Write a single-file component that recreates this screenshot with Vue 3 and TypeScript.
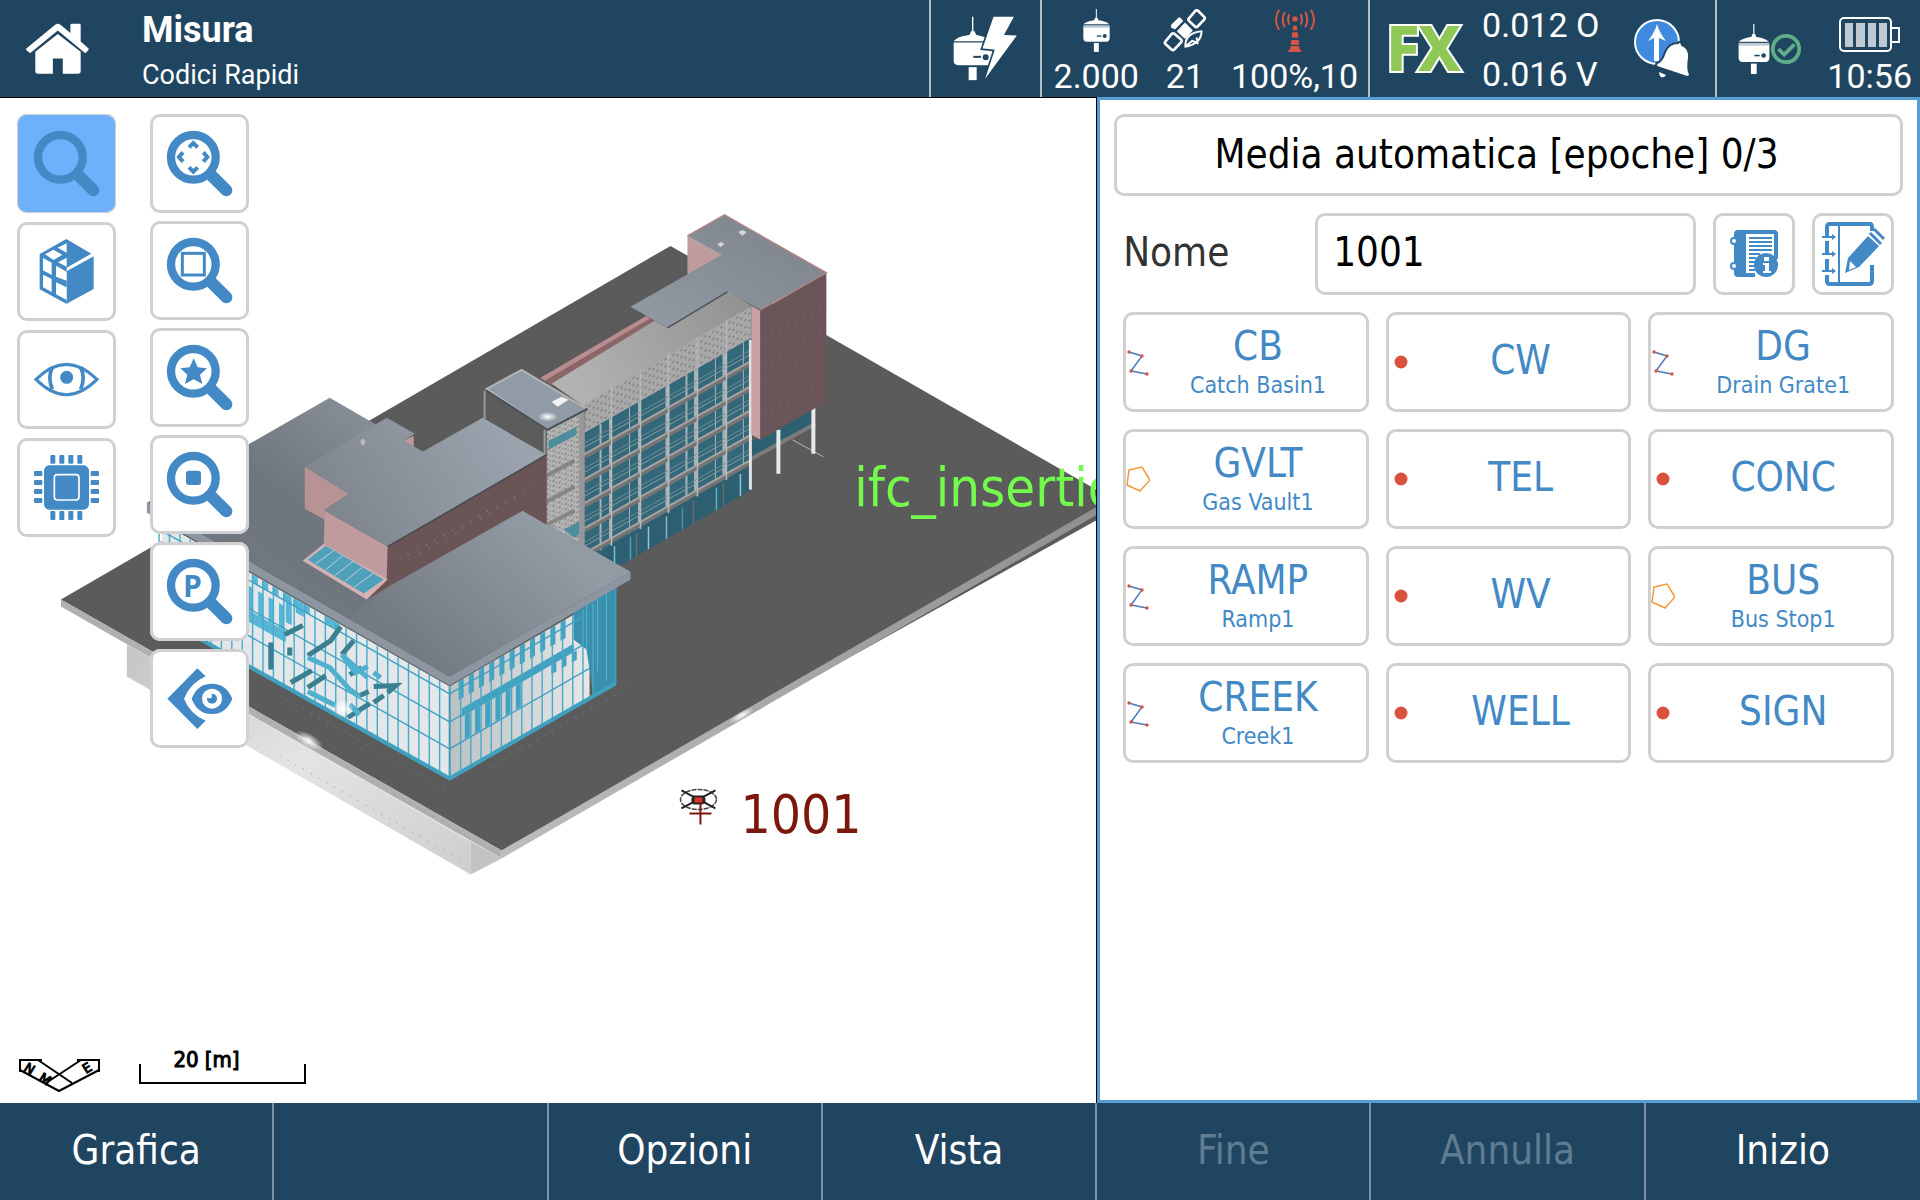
<script setup lang="ts">
import { ref } from 'vue'

type CodeKind = 'line' | 'point' | 'area'
interface QuickCode { code: string; name?: string; kind: CodeKind }
interface SoftKey { label: string; disabled?: boolean }

const pointName = ref('1001')

const codes: QuickCode[] = [
  { code: 'CB', name: 'Catch Basin1', kind: 'line' },
  { code: 'CW', kind: 'point' },
  { code: 'DG', name: 'Drain Grate1', kind: 'line' },
  { code: 'GVLT', name: 'Gas Vault1', kind: 'area' },
  { code: 'TEL', kind: 'point' },
  { code: 'CONC', kind: 'point' },
  { code: 'RAMP', name: 'Ramp1', kind: 'line' },
  { code: 'WV', kind: 'point' },
  { code: 'BUS', name: 'Bus Stop1', kind: 'area' },
  { code: 'CREEK', name: 'Creek1', kind: 'line' },
  { code: 'WELL', kind: 'point' },
  { code: 'SIGN', kind: 'point' },
]

const softKeys: SoftKey[] = [
  { label: 'Grafica' },
  { label: '' },
  { label: 'Opzioni' },
  { label: 'Vista' },
  { label: 'Fine', disabled: true },
  { label: 'Annulla', disabled: true },
  { label: 'Inizio' },
]

// Glass hall: both faces meet at the corner x = 450.
const corner = 450
const pt = (x: number, y: number) => `${Math.round(x * 10) / 10},${Math.round(y * 10) / 10}`
const westY = (x: number, t: number) => {
  const d = corner - x
  return (687 - d * 0.567) * (1 - t) + (780 - d * 0.56) * t
}
const eastY = (x: number, t: number) => {
  const d = x - corner
  return (687 - d * 0.58) * (1 - t) + (780 - d * 0.573) * t
}
const quad = (f: (x: number, t: number) => number, x0: number, x1: number, t0: number, t1: number) =>
  [pt(x0, f(x0, t0)), pt(x1, f(x1, t0)), pt(x1, f(x1, t1)), pt(x0, f(x0, t1))].join(' ')

const rowStops = [0.08, 0.38, 0.67]
const westMullions = Array.from({ length: 28 }, (_, i) => {
  const x = 440 - i * 10.4
  return { x, y1: westY(x, 0), y2: westY(x, 1) }
})
const eastMullions = Array.from({ length: 14 }, (_, i) => {
  const x = 461 + i * 10.2
  return { x, y1: eastY(x, 0), y2: eastY(x, 1) }
})
const westPatches: string[] = [
  ...[0, 1, 2, 3, 4, 5].map((i) => quad(westY, 252 + i * 10.4, 258 + i * 10.4, 0, 0.08)),
  ...[0, 1, 2, 3].map((i) => quad(westY, 248 + i * 10.4, 253 + i * 10.4, 0.14, 0.4)),
  quad(westY, 248, 286, 0.4, 0.52),
  quad(westY, 296, 304, 0, 0.14),
  quad(westY, 326, 340, 0, 0.07),
  quad(westY, 286, 292, 0, 0.3),
]
const eastPatches: string[] = [
  ...[0, 1, 2, 3, 4, 5, 6, 7, 8, 9, 10].map((i) => quad(eastY, 459 + i * 10.2, 464 + i * 10.2, 0, 0.2)),
  quad(eastY, 462, 574, 0.31, 0.4),
  ...[1, 2, 3, 4, 5, 6].map((i) => quad(eastY, 455 + i * 10.2, 460 + i * 10.2, 0.4, 0.66)),
  ...[9, 10, 11].map((i) => quad(eastY, 460 + i * 10.2, 465 + i * 10.2, 0.4, 0.5)),
]

// Office wing: floor beams fall to the left, posts stand on every bay.
const beams = [363, 388, 412, 437, 462].map((y) => ({ y1: y, y2: y + 167 * 0.56 }))
const wingTop = (x: number) => 338 + (752 - x) * 0.572
const posts = [
  { x: 601, w: 2 }, { x: 611, w: 3 }, { x: 630, w: 1 }, { x: 640, w: 3 }, { x: 668, w: 4 },
  { x: 687, w: 2 }, { x: 696, w: 3 }, { x: 716, w: 1 }, { x: 725, w: 4 }, { x: 744, w: 1 },
].map((p) => ({ ...p, y1: wingTop(p.x), y2: wingTop(p.x) + 126 }))
const tallPosts = [612, 641, 669, 698, 727].map((x) => ({ x, y1: wingTop(x) - 32, y2: wingTop(x) + 128 }))
const groundPosts = [
  { x: 615, c: '#6fc0d6' }, { x: 631, c: '#4aa3bd' }, { x: 637, c: '#6b7275' }, { x: 649, c: '#8cc6d6' },
  { x: 667, c: '#8cb6c0' }, { x: 683, c: '#3f93ad' }, { x: 694, c: '#6b6b6b' }, { x: 717, c: '#57b3cc' },
  { x: 724, c: '#6b6b6b' }, { x: 741, c: '#8cc6d6' },
].map((p) => ({ ...p, y1: wingTop(p.x) + 130, y2: 490 + (752 - p.x) * 0.577 }))
</script>

<template>
  <div class="app">
    <svg class="defs" aria-hidden="true">
      <symbol id="receiver" viewBox="0 0 82 130">
        <path d="M39 0h3v26h-3z" fill="#fff" />
        <path d="M1 46C10 38 22 36 34 34L37 26h7l3 8c12 2 24 4 33 12z" fill="#fff" />
        <path d="M1 49h80v8H1z" fill="#b9c6d0" />
        <path d="M1 56h80v32q0 11-11 11H12Q1 99 1 88z" fill="#fff" />
        <path d="M42 80h14v4H42z" fill="#204561" />
        <circle cx="66" cy="82" r="6" fill="#204561" />
        <path d="M33 103h15v27H33z" fill="#fff" />
      </symbol>
      <symbol id="lens" viewBox="450 42 297 297">
        <circle cx="580" cy="172" r="67" fill="none" stroke="#4289c5" stroke-width="25" />
        <path d="M636 228L679 271" stroke="#4289c5" stroke-width="36" stroke-linecap="round" />
      </symbol>
    </svg>

    <header class="topbar">
      <button class="home" type="button" aria-label="Home">
        <svg viewBox="78 68 190 154" width="63" height="51">
          <path fill="#fff" d="M78 146L166 73Q174 67 182 73L212 98V74Q212 70 216 70H239Q243 70 243 74V124L267 145V149L259 158H255L174 91L92 158H88L78 149Z" />
          <path fill="#fff" d="M106 155L174 101L243 155V213Q243 221 235 221H189V175H159V221H114Q106 221 106 213Z" />
        </svg>
      </button>
      <div class="titles">
        <h1>Misura</h1>
        <p>Codici Rapidi</p>
      </div>
      <div class="cell power">
        <svg viewBox="100 48 192 194" width="64" height="65">
          <path fill="#fff" d="M157 50h4v43h4l4 11c12 3 24 5 34 12l12 7H102c8-7 14-12 22-13 8-3 18-4 26-6l4-11h3z" />
          <path fill="#fff" d="M102 127h116v54q0 14-14 14H116q-14 0-14-14z" />
          <path fill="#204561" d="M161 167h23v6h-23z" />
          <circle cx="198" cy="171" r="9" fill="#204561" />
          <path fill="#fff" d="M147 201h24v39h-24z" />
          <path fill="#fff" stroke="#204561" stroke-width="5" d="M220 47H287L257 102L296 104L189 250L222 151L185 147Z" />
        </svg>
      </div>
      <div class="cell status">
        <div class="stat">
          <svg width="27" height="43"><use href="#receiver" /></svg>
          <span>2.000</span>
        </div>
        <div class="stat">
          <svg viewBox="734 26 132 130" width="44" height="43" fill="none" stroke="#fff" stroke-linejoin="round">
            <path stroke-width="8" d="M832 31Q836 28 840 32L858 50Q862 54 858 58L838 79Q834 83 830 79L812 62Q808 58 812 54Z" />
            <path stroke-width="8" d="M760 101Q764 98 768 101L788 118Q792 122 788 127L768 148Q764 152 760 149L741 132Q737 128 741 124Z" />
            <path fill="#fff" stroke-width="4" d="M800 70L821 91L800 114L778 93Z" />
            <path fill="#fff" stroke-width="6" d="M783 54L791 62L769 84L761 81V75Z" />
            <path stroke-width="6" d="M801 140Q799 98 850 93Q850 130 801 140L822 122L838 130L835 112" />
          </svg>
          <span>21</span>
        </div>
        <div class="stat">
          <svg viewBox="1064 26 126 130" width="42" height="43" fill="none" stroke="#da5541" stroke-width="6">
            <circle cx="1127" cy="56" r="8" fill="#da5541" stroke="none" />
            <path d="M1110 42Q1102 57 1110 73M1096 35Q1084 57 1096 81M1079 28Q1060 58 1079 89M1144 42Q1152 57 1144 73M1158 35Q1170 57 1158 81M1175 28Q1194 58 1175 89" />
            <path fill="#da5541" stroke="none" d="M1122 76h10l2 14h-14zM1119 96h16l2 16h-20zM1116 120h22l2 14h-26zM1114 138h26l1 11h5v7h-39v-7h5z" />
          </svg>
          <span>100%,10</span>
        </div>
      </div>
      <div class="cell precision">
        <svg class="fx-logo" viewBox="0 0 80 56" width="80" height="56">
          <text x="1" y="50" class="fx">F</text>
          <text x="33" y="50" class="fx">X</text>
        </svg>
        <div class="values"><span>0.012 O</span><span>0.016 V</span></div>
        <svg class="alert" viewBox="272 18 60 62" width="60" height="62">
          <circle cx="297" cy="42" r="22" fill="#3f8ade" stroke="#fff" stroke-width="2" />
          <path fill="#fff" d="M294 61V38L288 41Q295 32 297 24Q299 32 306 41L299 38V61Z" />
          <path fill="#fff" stroke="#204561" stroke-width="2" d="M319 42Q321 41 322 45Q330 48 329 58Q327 70 330 74Q330 77 327 77L297 67Q295 65 297 63Q302 62 305 52Q309 43 318 43Z" />
          <path fill="#fff" d="M299 72L306 75Q304 78 301 77Q299 75 299 72Z" />
        </svg>
      </div>
      <div class="cell device">
        <div class="link">
          <svg width="32" height="50"><use href="#receiver" /></svg>
          <svg viewBox="0 0 34 34" width="32" height="34" fill="none" stroke="#5fae88" stroke-width="4">
            <circle cx="17" cy="17" r="14" /><path d="M9 17L15 23L26 12" />
          </svg>
        </div>
        <div class="stat">
          <svg class="battery" viewBox="0 0 62 36" width="62" height="36" fill="none" stroke="#fff" stroke-width="2">
            <rect x="1" y="1" width="51" height="33" rx="4" />
            <path d="M52 11h8v14h-8" />
            <path fill="#becad3" stroke="none" d="M6 6h8v24H6zM17 6h9v24h-9zM29 6h8v24h-8zM40 6h8v24h-8z" />
          </svg>
          <span>10:56</span>
        </div>
      </div>
    </header>

    <main class="content">
      <section class="map">
        <svg class="scene" viewBox="0 98 1097 1005" preserveAspectRatio="xMinYMin meet">
          <defs>
            <linearGradient id="roofA" x1="0" y1="1" x2="1" y2="0">
              <stop offset="0" stop-color="#747b83" /><stop offset=".5" stop-color="#6f757d" /><stop offset="1" stop-color="#9ba4ae" />
            </linearGradient>
            <linearGradient id="hallRoof" gradientUnits="userSpaceOnUse" x1="400" y1="640" x2="520" y2="510">
              <stop offset="0" stop-color="#747a82" /><stop offset="1" stop-color="#929aa3" />
            </linearGradient>
            <linearGradient id="roofB" gradientUnits="userSpaceOnUse" x1="340" y1="520" x2="500" y2="420">
              <stop offset="0" stop-color="#80868d" /><stop offset="1" stop-color="#9aa3ae" />
            </linearGradient>
            <linearGradient id="roofC" x1="0" y1="1" x2="1" y2="0">
              <stop offset="0" stop-color="#929ba5" /><stop offset="1" stop-color="#7b8188" />
            </linearGradient>
            <linearGradient id="wingRoof" gradientUnits="userSpaceOnUse" x1="580" y1="390" x2="740" y2="300">
              <stop offset="0" stop-color="#b2b2b2" /><stop offset="1" stop-color="#939393" />
            </linearGradient>
            <linearGradient id="plinth" x1="0" y1="0" x2="1" y2="1">
              <stop offset="0" stop-color="#c4c4c4" /><stop offset=".5" stop-color="#e4e4e4" /><stop offset="1" stop-color="#cecece" />
            </linearGradient>
            <linearGradient id="edge" x1="0" y1="1" x2="1" y2="0">
              <stop offset="0" stop-color="#bdbdbd" /><stop offset="1" stop-color="#8e8e8e" />
            </linearGradient>
            <linearGradient id="eastGlass" x1="0" y1="0" x2="1" y2="0">
              <stop offset="0" stop-color="#bcc1c3" /><stop offset="1" stop-color="#e6e8e8" />
            </linearGradient>
            <radialGradient id="glow"><stop offset="0" stop-color="#fff" /><stop offset="1" stop-color="#fff" stop-opacity="0" /></radialGradient>
            <pattern id="perf" width="8" height="7" patternUnits="userSpaceOnUse" patternTransform="skewY(-30)">
              <rect width="8" height="7" fill="#a8a8a8" /><path d="M1 1h2v2H1zM5 4h2v2H5z" fill="#858585" />
            </pattern>
            <pattern id="mesh" width="6" height="5" patternUnits="userSpaceOnUse" patternTransform="skewY(-30)">
              <rect width="6" height="5" fill="#b4b4b4" /><path d="M1 0h2v2H1zM4 3h1v2H4z" fill="#868686" />
            </pattern>
          </defs>

          <!-- terrain slab -->
          <path fill="#5b5b5b" d="M61 600L671 246L1120 503V508L502 851Z" />
          <path fill="#b0b0b0" d="M61 600L502 851V859L61 607Z" />
          <path fill="url(#edge)" d="M502 851L1110 500V508L502 859Z" />
          <path fill="url(#plinth)" d="M127 645L471 842V875L127 677Z" />
          <path fill="#c3c3c3" d="M471 842L502 859L471 875Z" />
          <ellipse cx="309" cy="741" rx="16" ry="7" fill="url(#glow)" transform="rotate(30 309 741)" />
          <ellipse cx="742" cy="716" rx="14" ry="4" fill="url(#glow)" transform="rotate(-30 742 716)" />
          <path stroke="#8d8d8d" stroke-width="1" stroke-dasharray="1 8" fill="none" d="M280 696L450 792M490 768L632 686M262 718L470 838M280 756L460 860" />

          <!-- office wing -->
          <path fill="#8a6669" d="M541 378L649 316L657 322L552 386Z" />
          <path fill="#b78d90" d="M541 378L647 316L650 319L545 381Z" />
          <path fill="url(#wingRoof)" d="M552 384L655 321L668 328L728 291L752 306L588 409Z" />
          <path fill="url(#perf)" d="M586 404L752 306V339L585 434Z" />
          <path fill="#33687a" d="M585 433L752 338V490L622 565L585 545Z" />
          <path fill="#2d5f70" d="M585 562L752 462V490L622 565Z" />
          <line v-for="p in groundPosts" :key="'g' + p.x" :x1="p.x" :x2="p.x" :y1="p.y1" :y2="p.y2" :stroke="p.c" stroke-width="1.5" />
          <line v-for="p in posts" :key="'p' + p.x" :x1="p.x" :x2="p.x" :y1="p.y1" :y2="p.y2" stroke="#a6b3b7" :stroke-width="p.w" />
          <g v-for="b in beams" :key="b.y1">
            <line x1="752" x2="585" :y1="b.y1" :y2="b.y2" stroke="#747474" stroke-width="5" />
            <line x1="752" x2="585" :y1="b.y1 - 2" :y2="b.y2 - 2" stroke="#a3a3a3" stroke-width="2" />
            <line x1="752" x2="585" :y1="b.y1 - 9" :y2="b.y2 - 9" stroke="#8b999d" stroke-width="1" />
            <line x1="752" x2="585" :y1="b.y1 - 13" :y2="b.y2 - 13" stroke="#6c8a93" stroke-width="1" />
          </g>
          <line v-for="p in tallPosts" :key="'t' + p.x" :x1="p.x" :x2="p.x" :y1="p.y1" :y2="p.y2" stroke="#b9b9b9" stroke-width="1.5" />

          <!-- end block -->
          <path fill="#2d6172" d="M752 442L813 407V426L752 460Z" />
          <path stroke="#7c7c7c" stroke-width="4" d="M752 459L816 424" />
          <path stroke="#b9b9b9" stroke-width="1" d="M793 440L824 457" />
          <path stroke="#e9e9e9" stroke-width="4" d="M779 430V474M814 408V454" />
          <path stroke="#e2e2e2" stroke-width="3" d="M751 340V490" />
          <path fill="#bf9c9e" d="M688 236L724 256L688 275Z" />
          <path fill="#c9a1a4" d="M752 306L761 311V440L752 435Z" />
          <path fill="#6a5658" d="M761 311L827 273V402L761 440Z" />
          <path fill="url(#roofC)" d="M725 215L827 273L761 310L728 292L668 328L631 307L722 255L688 236Z" />
          <path fill="none" stroke="#b08386" stroke-width="1.5" d="M688 236L725 215L827 273L761 310" />
          <path stroke="#4d535a" stroke-width="1.5" d="M668 328L728 292" />
          <path fill="#d8d8d8" d="M718 244l4-2 3 2-4 3zM739 232l4-2 4 2-4 4z" />
          <path stroke="#96858a" stroke-width="1" stroke-dasharray="1 8" fill="none" d="M765 340L825 306M765 366L825 332M765 382L800 362M765 415L820 384" />

          <!-- stair tower -->
          <path fill="url(#mesh)" d="M547 431L585 409V546L547 524Z" />
          <path stroke="#858585" stroke-width="4" d="M547 476L575 461M547 502L575 487M547 525L575 511" />
          <path fill="#4e8d9d" d="M549 441L577 427V435L549 450ZM564 530L583 520V532L575 538Z" />
          <path stroke="#979797" stroke-width="5" d="M582 414V544" />
          <path fill="#5c5c5c" d="M484 391L547 429V456L484 420Z" />
          <path stroke="#9a9a9a" stroke-width="2" d="M485 391V419M545 430V456" />
          <path fill="#919ba7" stroke="#b4b4b4" stroke-width="2" d="M487 389L522 370L587 409L548 430Z" />
          <path fill="none" stroke="#4a5059" stroke-width="2" d="M487 391L548 430L588 409" />
          <path fill="#f1f1f1" d="M552 402l10-5 7 3-11 7z" />
          <ellipse cx="548" cy="417" rx="10" ry="5" fill="url(#glow)" />

          <!-- glass hall -->
          <path fill="#e3e7e9" d="M162 523L450 687V780L162 620Z" />
          <path fill="url(#eastGlass)" d="M450 687L590 606V699L450 780Z" />
          <path fill="#3a8fad" d="M574 612L616 588V684L594 697L587 650L574 640Z" />
          <path stroke="#56b7d3" stroke-width="1" d="M587 606V650M598 600V672M607 595V680" />
          <polygon v-for="(p, i) in westPatches" :key="'w' + i" :points="p" fill="#57b6d6" />
          <polygon v-for="(p, i) in eastPatches" :key="'e' + i" :points="p" fill="#43a2c1" />
          <line v-for="m in westMullions" :key="'wm' + m.x" :x1="m.x" :x2="m.x" :y1="m.y1" :y2="m.y2" stroke="#45aaca" stroke-width="1.4" />
          <line v-for="m in eastMullions" :key="'em' + m.x" :x1="m.x" :x2="m.x" :y1="m.y1" :y2="m.y2" stroke="#4ba9c6" stroke-width="1.4" />
          <g v-for="t in rowStops" :key="t" stroke="#3fa2c2" stroke-width="1.4">
            <line x1="162" :y1="westY(162, t)" x2="450" :y2="westY(450, t)" />
            <line x1="450" :y1="eastY(450, t)" x2="590" :y2="eastY(590, t)" />
          </g>
          <path fill="none" stroke="#40a0bf" stroke-width="4" d="M162 618L450 779L616 684" />
          <path stroke="#3e9dbb" stroke-width="2" d="M450 687V780M616 588V685" />
          <path fill="none" stroke="#3a7f90" stroke-width="5" d="M285 635L303 626M341 627L331 641L308 656M354 641L342 655M291 683L312 671M308 688L326 676M350 675L362 668M360 696L369 692M348 718L370 704M374 703L384 696M374 687L396 686L388 693M271 643V670M290 648V656" />
          <path fill="none" stroke="#4fb0cf" stroke-width="5" d="M308 658L330 668L350 690L360 697M342 655L356 673L368 667M308 692L336 706M345 658L368 678M350 705L360 715M374 673L381 678" />
          <ellipse cx="343" cy="709" rx="11" ry="9" fill="url(#glow)" />

          <path fill="#8c95a0" d="M147 503L450 677L631 572V580L450 686L147 513Z" />
          <path fill="url(#roofA)" d="M147 503L330 398L523 510L450 677Z" />
          <path fill="url(#hallRoof)" d="M388 587L523 510L631 572L450 677L350 619Z" />

          <!-- upper block -->
          <path fill="#c09a9c" d="M404 441L414 436V447Z" />
          <path fill="#b89396" d="M305 467L349 494L325 510V520L305 509Z" />
          <path fill="#c09b9e" d="M325 511L388 547V581L324 544Z" />
          <path fill="#6a5456" d="M388 547L547 455V525L523 511L389 587L367 600L387 580Z" />
          <path fill="url(#roofB)" d="M387 418L415 434L404 441L423 452L483 418L547 455L388 547L325 511L349 494L305 467Z" />
          <path fill="none" stroke="#454a50" stroke-width="1.5" d="M388 547L547 455" />
          <path stroke="#a89498" stroke-width="1" stroke-dasharray="1 9" fill="none" d="M420 554L540 484M400 560L520 494" />
          <path fill="#d5b1b3" d="M303 561L324 544L388 580L367 600Z" />
          <path fill="#4fa1bb" d="M308 560L326 546L384 580L364 594Z" />
          <path stroke="#bcd0d5" stroke-width="1" d="M316 564L334 551M326 570L343 556M335 576L353 562M345 582L362 568M354 588L373 574" />
          <path fill="#b7b7b7" d="M361 440l3-1 2 3-2 4-3-2z" />

          <text class="label" x="855" y="506" font-size="54" fill="#73fb4c">ifc_insertion</text>
          <text class="label" x="741" y="834" font-size="53" fill="#7c170e">1001</text>
          <ellipse cx="699" cy="800" rx="18" ry="10" fill="none" stroke="#444" stroke-width="1.5" stroke-dasharray="5 1" />
          <path stroke="#222" stroke-width="2" d="M682 791L716 809M716 791L682 809" />
          <path fill="#222" d="M694 796h10l2 3v4l-3 2h-9l-2-3v-3z" />
          <rect x="695" y="798" width="8" height="5" fill="#d8352c" />
          <path stroke="#7c170e" stroke-width="2" d="M701 803V825M690 814H712" />
        </svg>

        <nav class="tools">
          <div class="tool-col main-tools">
            <button type="button" class="tool active" aria-label="Zoom"><svg><use href="#lens" /></svg></button>
            <button type="button" class="tool" aria-label="3D">
              <svg viewBox="51 366 297 297">
                <path fill="#4289c5" d="M199 417L119 462V568L200 612V503L274 461Z" />
                <path fill="#4289c5" d="M200 514L281 469V567L200 611Z" />
                <path fill="#fff" d="M129 474L155 488V525L129 511ZM168 497L200 515V542L168 530ZM129 524L155 537V576L129 562ZM168 547L200 562V600L168 583ZM173 443L200 430V458ZM135 463L160 449L187 464L161 480ZM174 487L200 473V500Z" />
              </svg>
            </button>
            <button type="button" class="tool" aria-label="Vista">
              <svg viewBox="51 690 297 297" fill="none" stroke="#4289c5" stroke-width="9">
                <path d="M108 838Q199 748 291 838Q199 930 108 838Z" />
                <path stroke-width="11" d="M157 802Q142 832 157 868M242 802Q257 832 242 868" />
                <circle cx="200" cy="832" r="19.500" fill="#4289c5" stroke="none" />
              </svg>
            </button>
            <button type="button" class="tool" aria-label="Sensore">
              <svg viewBox="51 1014 297 297" fill="#4289c5">
                <rect x="132" y="1096" width="135" height="133" rx="16" />
                <rect x="163" y="1124" width="74" height="76" rx="9" fill="none" stroke="#fff" stroke-width="5" />
                <g v-for="i in 4" :key="i">
                  <rect :x="124 + i * 27" y="1065" width="15" height="26" rx="3" />
                  <rect :x="124 + i * 27" y="1233" width="15" height="27" rx="3" />
                  <rect x="102" :y="1086 + i * 27" width="25" height="15" rx="3" />
                  <rect x="272" :y="1086 + i * 27" width="25" height="15" rx="3" />
                </g>
              </svg>
            </button>
          </div>
          <div class="tool-col zoom-tools">
            <button type="button" class="tool" aria-label="Zoom estensione">
              <svg viewBox="450 42 297 297" fill="none" stroke="#4289c5" stroke-width="12">
                <use href="#lens" x="450" y="42" width="297" height="297" />
                <path d="M567 142L580 129L593 142M567 202L580 215L593 202M549 157L537 171L549 185M610 157L622 171L610 185" />
              </svg>
            </button>
            <button type="button" class="tool" aria-label="Zoom finestra">
              <svg viewBox="450 42 297 297" fill="none" stroke="#4289c5" stroke-width="9">
                <use href="#lens" x="450" y="42" width="297" height="297" />
                <rect x="547" y="139" width="66" height="65" />
              </svg>
            </button>
            <button type="button" class="tool" aria-label="Zoom preferito">
              <svg viewBox="450 42 297 297" fill="#4289c5">
                <use href="#lens" x="450" y="42" width="297" height="297" />
                <path d="M581 133L593 160L621 163L600 182L607 210L581 196L555 210L562 182L541 163L569 160Z" />
              </svg>
            </button>
            <button type="button" class="tool" aria-label="Zoom punto">
              <svg viewBox="450 42 297 297" fill="#4289c5">
                <use href="#lens" x="450" y="42" width="297" height="297" />
                <rect x="558" y="149" width="45" height="43" rx="9" />
              </svg>
            </button>
            <button type="button" class="tool" aria-label="Zoom P">
              <svg viewBox="450 42 297 297">
                <use href="#lens" x="450" y="42" width="297" height="297" />
                <text x="549" y="206" class="p-glyph">P</text>
              </svg>
            </button>
            <button type="button" class="tool" aria-label="Vista precedente">
              <svg viewBox="30 687 297 297" fill="#4289c5">
                <path d="M82 836L172 745L197 769Q150 790 132 836Q150 882 197 902L172 927Z" />
                <path d="M155 836Q172 791 216 791Q258 791 277 836Q258 882 216 882Q172 882 155 836Z" />
                <circle cx="216" cy="836" r="30" fill="#fff" />
                <circle cx="216" cy="836" r="15" />
                <circle cx="208" cy="827" r="8" fill="#fff" />
              </svg>
            </button>
          </div>
        </nav>

        <div class="legend">
          <svg viewBox="17 1056 85 38" width="85" height="38" fill="none" stroke="#000" stroke-width="2">
            <path d="M20 1072V1060H42M20 1070L59 1091L99 1070M38 1060L72 1083M99 1072V1060H77M81 1060L46 1083" />
            <text class="axis" x="0" y="0" transform="translate(23 1070) rotate(32)">N</text>
            <text class="axis" x="0" y="0" transform="translate(38 1080) rotate(32)">M</text>
            <text class="axis" x="0" y="0" transform="translate(86 1074) rotate(-32)">E</text>
          </svg>
          <div class="scale">20 [m]</div>
        </div>
      </section>

      <form class="panel" @submit.prevent>
        <output class="averaging">Media automatica [epoche] 0/3</output>
        <div class="fields">
          <div class="name-row">
            <label for="point-name">Nome</label>
            <input id="point-name" v-model="pointName" type="text" />
            <button type="button" class="square" aria-label="Informazioni codice">
              <svg viewBox="0 0 82 82" fill="none" stroke="#4289c5">
                <path fill="#4289c5" stroke="none" d="M25 17H61Q65 17 65 21V46H61V21H33V60H42V64H25Q21 64 21 60V55H24V51H21V30H24V26H21V21Q21 17 25 17Z" />
                <circle cx="21" cy="28" r="3" stroke-width="2" fill="#fff" />
                <circle cx="21" cy="53" r="3" stroke-width="2" fill="#fff" />
                <path stroke-width="2" d="M36 25H59M36 29H59M36 33H59M36 37H59M36 41H47M36 45H43M36 49H42M36 53H41M36 57H42" />
                <circle cx="53" cy="52" r="12" fill="#4289c5" stroke="none" />
                <path fill="#fff" stroke="none" d="M51 44h5v4h-5zM50 50h6v8h2v2h-8v-2h2v-6h-2z" />
              </svg>
            </button>
            <button type="button" class="square" aria-label="Modifica codice">
              <svg viewBox="0 0 82 82" fill="none" stroke="#4289c5" stroke-width="4">
                <path d="M15 23V14Q15 11 18 11H58Q60 11 60 14V18M60 52V68Q60 71 57 71H18Q15 71 15 68V62M15 28V40M15 46V57" />
                <path stroke-width="2" d="M27 11V71M10 24H22M10 41H22M10 58H22" />
                <path fill="#4289c5" stroke="none" d="M20 21l4 3-4 3zM20 38l4 3-4 3zM20 55l4 3-4 3zM33 60L36 45L56 23L67 33L47 54Z" />
                <path fill="#fff" stroke="none" d="M38 48L44 54L37 57Z" />
                <path stroke-width="3" d="M58 20L69 31M62 16L72 26" />
              </svg>
            </button>
          </div>
          <div class="codes">
            <button v-for="c in codes" :key="c.code" type="button" class="code">
              <svg viewBox="0 0 24 30" width="24" height="30">
                <g v-if="c.kind === 'line'">
                  <path d="M3 5L16 9L5 24L21 27" fill="none" stroke="#4a79b8" stroke-width="1.500" />
                  <circle v-for="(p, i) in [[3, 5], [16, 9], [5, 24], [21, 27]]" :key="i" :cx="p[0]" :cy="p[1]" r="1.700" fill="#d9523f" />
                </g>
                <circle v-else-if="c.kind === 'point'" cx="12" cy="15" r="6.500" fill="#d9523f" />
                <path v-else d="M3 6L16 3L24 16L14 27L1 21Z" fill="none" stroke="#f39a38" stroke-width="1.500" />
              </svg>
              <span class="code-text">
                <span class="code-id">{{ c.code }}</span>
                <span v-if="c.name" class="code-name">{{ c.name }}</span>
              </span>
            </button>
          </div>
        </div>
      </form>
    </main>

    <footer class="softkeys">
      <button v-for="(k, i) in softKeys" :key="i" type="button" :disabled="k.disabled" :aria-label="k.label || 'F2'">{{ k.label }}</button>
    </footer>
  </div>
</template>

<style>
body {
  margin: 0;
}
</style>

<style scoped>
.app {
  display: grid;
  grid-template-rows: auto 1fr auto;
  min-height: 100vh;
  background: #fff;
  font-family: "DejaVu Sans Condensed", "DejaVu Sans", sans-serif;
  font-size: 40px;
}
.app * {
  box-sizing: border-box;
}
.defs {
  position: absolute;
  width: 0;
  height: 0;
}
button {
  margin: 0;
  padding: 0;
  border: 0;
  background: none;
  color: inherit;
  font: inherit;
}

.topbar {
  display: flex;
  height: 97px;
  background: #204561;
  color: #fff;
  font-family: Roboto, sans-serif;
}
.home {
  display: flex;
  align-items: center;
  padding: 0 26px;
}
.titles {
  flex: 1;
  display: flex;
  flex-direction: column;
  gap: 8px;
  padding: 9px 27px;
}
.titles h1 {
  margin: 0;
  font-size: 36px;
  line-height: 42px;
  font-weight: 700;
}
.titles p {
  margin: 0;
  font-size: 27px;
  line-height: 32px;
}
.cell {
  display: flex;
  align-items: center;
  border-left: 2px solid #b3c0ca;
  font-size: 34px;
  line-height: 40px;
}
.power {
  padding: 0 23px 0 22px;
}
.status {
  align-items: stretch;
  gap: 24px;
  padding: 0 10px 0 12px;
}
.stat {
  display: flex;
  flex-direction: column;
  align-items: center;
  gap: 4px;
  height: 97px;
  padding-top: 9px;
}
.precision {
  gap: 17px;
  padding: 0 23px 0 15px;
}
.fx-logo {
  overflow: visible;
}
.fx {
  font-family: "Noto Sans", sans-serif;
  font-size: 62px;
  font-weight: 800;
  fill: #8fc857;
  stroke: #fff;
  stroke-width: 4px;
  paint-order: stroke;
}
.values {
  display: flex;
  flex-direction: column;
  gap: 9px;
  padding-top: 2px;
}
.alert {
  margin-left: 16px;
}
.device {
  gap: 25px;
  padding: 0 8px 0 21px;
}
.link {
  display: flex;
  align-items: center;
}
.battery {
  margin: 8px 0 -1px;
}

.content {
  display: grid;
  grid-template-columns: minmax(0, 4fr) minmax(0, 3fr);
}
.map {
  position: relative;
  overflow: hidden;
  border-top: 1px solid #000;
  border-right: 1px solid #000;
}
.scene {
  position: absolute;
  inset: 0;
  width: 100%;
  height: 100%;
}
.label {
  font-family: "DejaVu Sans Condensed", "DejaVu Sans", sans-serif;
}
.tools {
  position: absolute;
  top: 16px;
  left: 17px;
  display: flex;
  align-items: flex-start;
  gap: 34px;
}
.tool-col {
  display: grid;
}
.main-tools {
  gap: 9px;
}
.zoom-tools {
  gap: 8px;
}
.tool {
  width: 99px;
  height: 99px;
  border-radius: 10px;
  background: #fff;
  box-shadow: inset 0 0 0 3px #d0d0d0;
}
.tool svg {
  display: block;
  width: 99px;
  height: 99px;
}
.tool.active {
  background: #6eb0f9;
  box-shadow: inset 0 0 0 1px #d0d0d0;
}
.p-glyph {
  font-family: "Open Sans", sans-serif;
  font-size: 90px;
  font-weight: 700;
  fill: #4289c5;
}
.legend {
  position: absolute;
  left: 17px;
  bottom: 9px;
  display: flex;
  align-items: flex-end;
  gap: 37px;
}
.axis {
  font-family: "DejaVu Sans", sans-serif;
  font-size: 13px;
  fill: #000;
  stroke: #000;
  stroke-width: 1px;
}
.scale {
  position: relative;
  width: 167px;
  height: 36px;
  margin-bottom: 10px;
  padding-right: 32px;
  font-size: 22px;
  line-height: 24px;
  text-align: center;
  -webkit-text-stroke: 1px #000;
}
.scale::after {
  content: "";
  position: absolute;
  inset: auto 0 0;
  height: 18px;
  border: 2px solid #000;
  border-top: 0;
}

.panel {
  display: flex;
  flex-direction: column;
  gap: 17px;
  padding: 14px;
  border: 3px solid #569dd6;
}
.averaging {
  display: block;
  height: 82px;
  padding-right: 24px;
  border: 3px solid #d0d0d0;
  border-radius: 10px;
  color: #000;
  line-height: 74px;
  text-align: center;
  white-space: nowrap;
}
.fields {
  display: flex;
  flex-direction: column;
  gap: 17px;
  padding: 0 9px;
}
.name-row {
  display: flex;
  gap: 17px;
}
.name-row label {
  flex: 0 0 175px;
  color: #333;
  line-height: 78px;
}
.name-row input {
  flex: 1;
  min-width: 0;
  height: 82px;
  padding: 0 15px 4px;
  border: 3px solid #d0d0d0;
  border-radius: 10px;
  background: #fff;
  color: #000;
  font: inherit;
}
.square {
  flex: 0 0 82px;
  height: 82px;
  border-radius: 10px;
  box-shadow: inset 0 0 0 3px #d0d0d0;
}
.square svg {
  display: block;
  width: 82px;
  height: 82px;
}
.codes {
  display: grid;
  grid-template-columns: repeat(3, 1fr);
  gap: 17px;
}
.code {
  display: flex;
  align-items: center;
  height: 100px;
  border: 3px solid #d0d0d0;
  border-radius: 10px;
  background: #fff;
  color: #4289c5;
}
.code-text {
  flex: 1;
  display: flex;
  flex-direction: column;
  padding-top: 2px;
}
.code-id {
  line-height: 44px;
}
.code-id:only-child {
  padding-bottom: 6px;
}
.code-name {
  font-size: 23px;
  line-height: 34px;
}

.softkeys {
  display: grid;
  grid-template-columns: repeat(7, 1fr);
  height: 97px;
  background: #204561;
  color: #fff;
}
.softkeys button {
  border-right: 2px solid #7d93a4;
  padding-bottom: 4px;
}
.softkeys button:last-child {
  border-right: 0;
}
.softkeys button:disabled {
  color: #5f7c91;
}
</style>
